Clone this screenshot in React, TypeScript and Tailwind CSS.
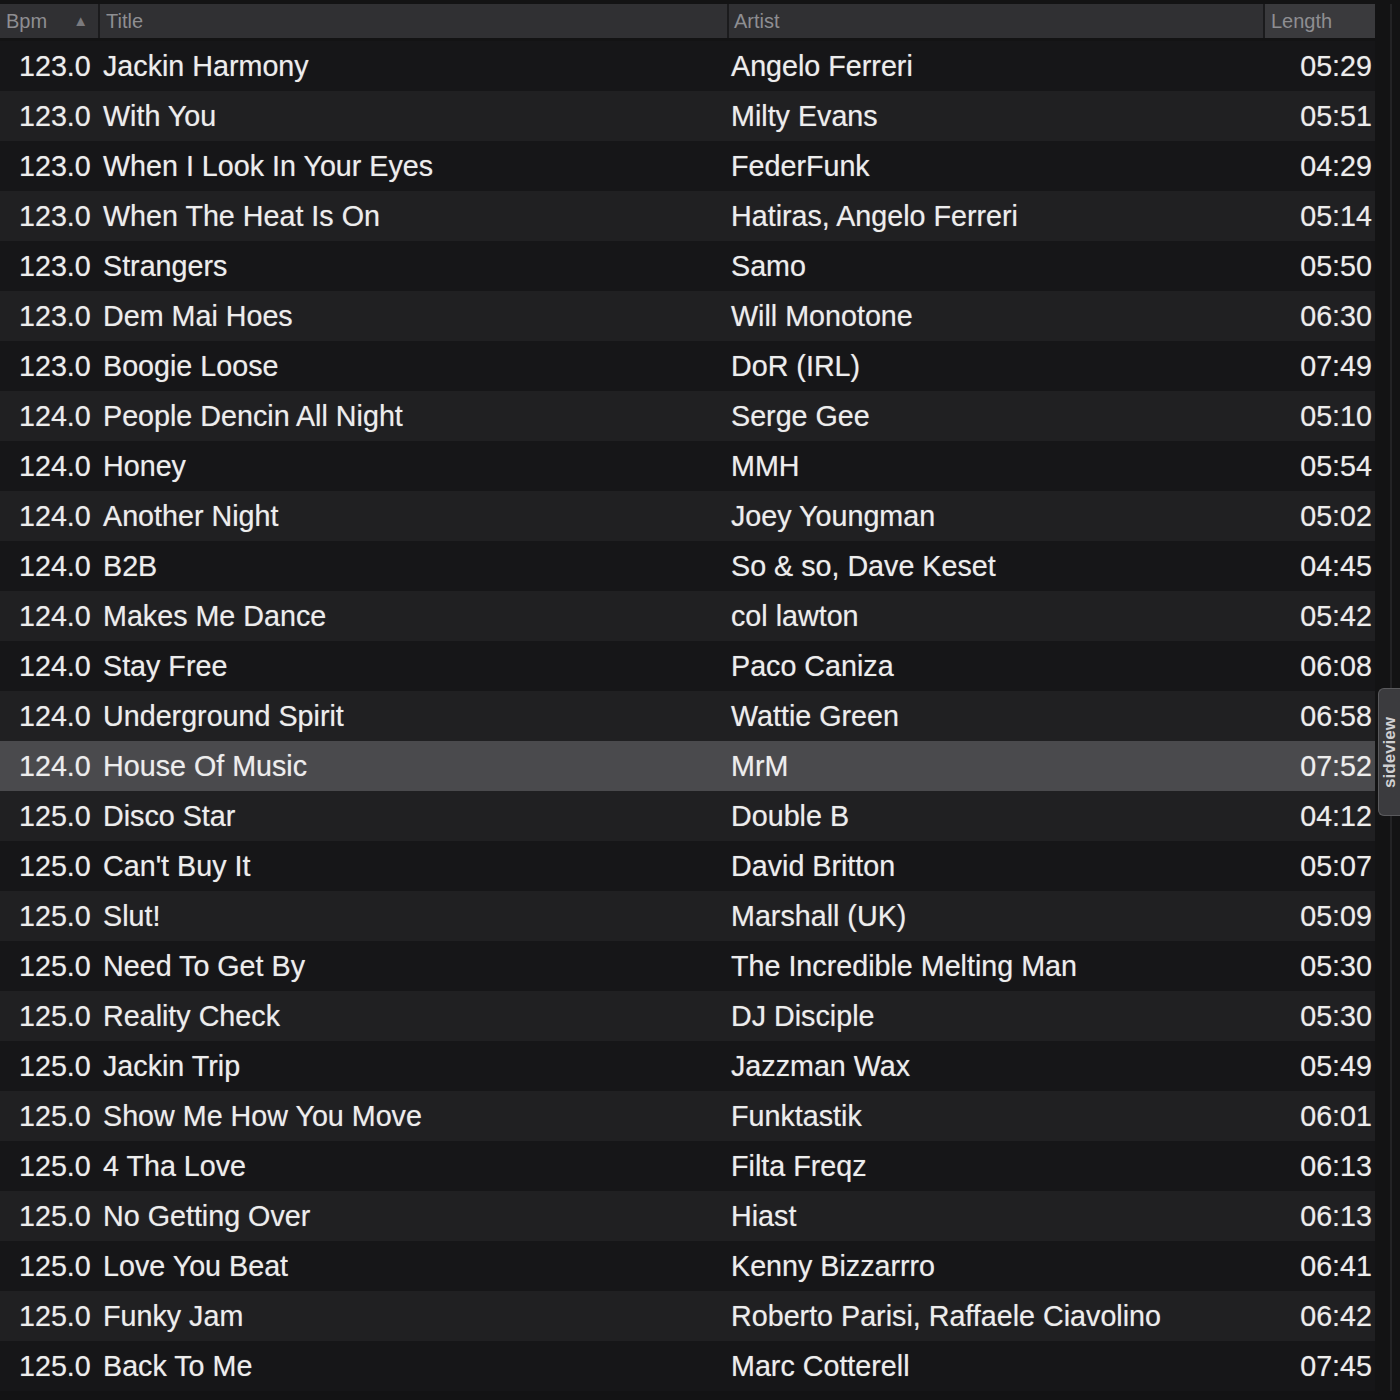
import React from 'react';

type Track = { bpm: string; title: string; artist: string; length: string };

const tracks: Track[] = [
  { bpm: '123.0', title: 'Jackin Harmony', artist: 'Angelo Ferreri', length: '05:29' },
  { bpm: '123.0', title: 'With You', artist: 'Milty Evans', length: '05:51' },
  { bpm: '123.0', title: 'When I Look In Your Eyes', artist: 'FederFunk', length: '04:29' },
  { bpm: '123.0', title: 'When The Heat Is On', artist: 'Hatiras, Angelo Ferreri', length: '05:14' },
  { bpm: '123.0', title: 'Strangers', artist: 'Samo', length: '05:50' },
  { bpm: '123.0', title: 'Dem Mai Hoes', artist: 'Will Monotone', length: '06:30' },
  { bpm: '123.0', title: 'Boogie Loose', artist: 'DoR (IRL)', length: '07:49' },
  { bpm: '124.0', title: 'People Dencin All Night', artist: 'Serge Gee', length: '05:10' },
  { bpm: '124.0', title: 'Honey', artist: 'MMH', length: '05:54' },
  { bpm: '124.0', title: 'Another Night', artist: 'Joey Youngman', length: '05:02' },
  { bpm: '124.0', title: 'B2B', artist: 'So & so, Dave Keset', length: '04:45' },
  { bpm: '124.0', title: 'Makes Me Dance', artist: 'col lawton', length: '05:42' },
  { bpm: '124.0', title: 'Stay Free', artist: 'Paco Caniza', length: '06:08' },
  { bpm: '124.0', title: 'Underground Spirit', artist: 'Wattie Green', length: '06:58' },
  { bpm: '124.0', title: 'House Of Music', artist: 'MrM', length: '07:52' },
  { bpm: '125.0', title: 'Disco Star', artist: 'Double B', length: '04:12' },
  { bpm: '125.0', title: "Can't Buy It", artist: 'David Britton', length: '05:07' },
  { bpm: '125.0', title: 'Slut!', artist: 'Marshall (UK)', length: '05:09' },
  { bpm: '125.0', title: 'Need To Get By', artist: 'The Incredible Melting Man', length: '05:30' },
  { bpm: '125.0', title: 'Reality Check', artist: 'DJ Disciple', length: '05:30' },
  { bpm: '125.0', title: 'Jackin Trip', artist: 'Jazzman Wax', length: '05:49' },
  { bpm: '125.0', title: 'Show Me How You Move', artist: 'Funktastik', length: '06:01' },
  { bpm: '125.0', title: '4 Tha Love', artist: 'Filta Freqz', length: '06:13' },
  { bpm: '125.0', title: 'No Getting Over', artist: 'Hiast', length: '06:13' },
  { bpm: '125.0', title: 'Love You Beat', artist: 'Kenny Bizzarrro', length: '06:41' },
  { bpm: '125.0', title: 'Funky Jam', artist: 'Roberto Parisi, Raffaele Ciavolino', length: '06:42' },
  { bpm: '125.0', title: 'Back To Me', artist: 'Marc Cotterell', length: '07:45' },
];

const SELECTED = 14;

const cols = 'grid grid-cols-[100px_629px_536px_110px]';

export default function App() {
  return (
    <div
      className="relative h-[1400px] w-[1400px] overflow-hidden bg-[#131314] pt-[4px]"
      style={{ fontFamily: '"Liberation Sans", Arial, sans-serif' }}
    >
      <div className="flex">
        <div className="w-[1375px]">
          {/* column headers */}
          <div className={`${cols} h-[34px] bg-[#303033] text-[20px] text-[#8e8e92]`}>
            <div className="flex items-center justify-between border-r-2 border-[#1b1b1d] pl-[6px] pr-[10px]">
              <span>Bpm</span>
              <span className="text-[15px] text-[#7a7a7e]">▲</span>
            </div>
            <div className="flex items-center border-r-2 border-[#1b1b1d] pl-[6px]">Title</div>
            <div className="flex items-center border-r-2 border-[#1b1b1d] pl-[5px]">Artist</div>
            <div className="flex items-center bg-[#3a3a3d] pl-[6px]">Length</div>
          </div>

          {/* track rows */}
          <div className="mt-[3px]">
            {tracks.map((t, i) => {
              const bg =
                i === SELECTED ? 'bg-[#4a4a4d]' : i % 2 === 0 ? 'bg-[#161618]' : 'bg-[#202022]';
              return (
                <div
                  key={i}
                  className={`${cols} ${bg} h-[50px] items-center pt-[2px] text-[28.7px] text-[#ededed] [text-shadow:0_0_1px_rgba(255,255,255,0.45)]`}
                >
                  <div className="pl-[19px]">{t.bpm}</div>
                  <div className="pl-[3px] whitespace-nowrap">{t.title}</div>
                  <div className="pl-[2px] whitespace-nowrap">{t.artist}</div>
                  <div className="pr-[3px] text-right">{t.length}</div>
                </div>
              );
            })}
          </div>
        </div>
        <div className="ml-[15px] w-[2px] bg-[#232325]" />
      </div>

      {/* sideview drawer tab */}
      <div className="absolute right-0 top-[688px] flex h-[128px] w-[22px] items-center justify-center rounded-l-[6px] border border-r-0 border-[#5a5a5d] bg-[#3b3b3e]">
        <span className="rotate-180 text-[17px] font-bold leading-none text-[#d0d0d2] [writing-mode:vertical-rl]">sideview</span>
      </div>
    </div>
  );
}
